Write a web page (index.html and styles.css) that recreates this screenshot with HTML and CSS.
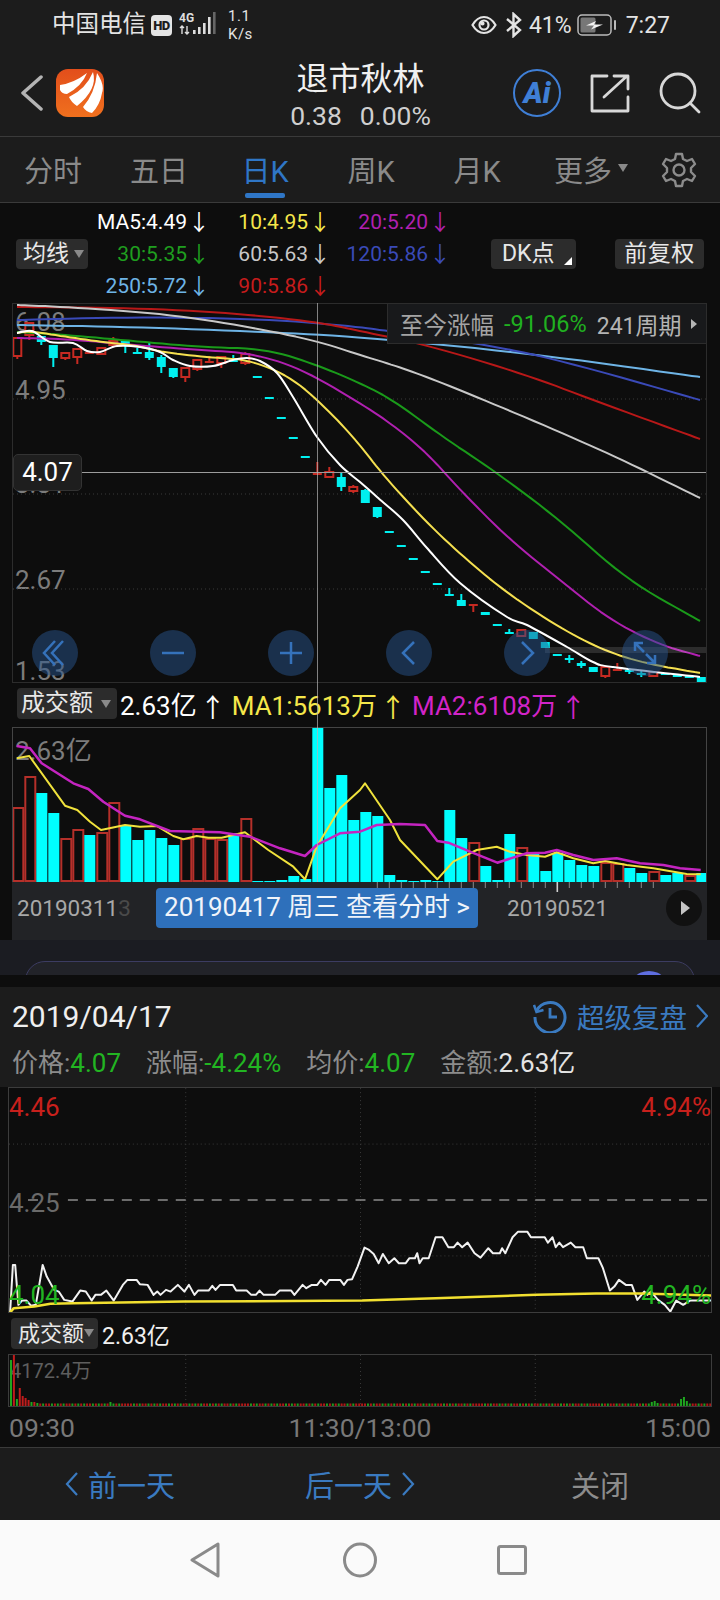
FILE: index.html
```html
<!DOCTYPE html>
<html lang="zh-CN">
<head>
  <meta charset="UTF-8" />
  <meta name="viewport" content="width=device-width, initial-scale=1.0"/>
  <title>退市秋林</title>
  <link rel="stylesheet" href="styles.css">
</head>
<body>

  <!-- Status bar -->
  <div class="status-bar">
    <div class="status-left">
      <span class="carrier">中国电信</span>
      <span class="hd-badge">HD</span>
      <svg class="signal" width="38" height="24" viewBox="0 0 38 24">
        <text x="0" y="10" class="signal-text">4G</text>
        <path d="M3 22V14M1 16l2-2 2 2M8 14v8M6 20l2 2 2-2" stroke="#ddd" stroke-width="1.4" fill="none"/>
        <rect x="14" y="18" width="2.6" height="4" fill="#ddd"/>
        <rect x="19" y="15" width="2.6" height="7" fill="#ddd"/>
        <rect x="24" y="11" width="2.6" height="11" fill="#ddd"/>
        <rect x="29" y="5" width="2.6" height="17" fill="#ddd"/>
        <rect x="34" y="0" width="2.6" height="22" fill="#666"/>
      </svg>
      <span class="net-speed">1.1<br>K/s</span>
    </div>
    <div class="status-right">
      <svg width="26" height="20" viewBox="0 0 26 20" fill="none" stroke="#e4e4e4" stroke-width="2.2">
        <path d="M1.5 10C5 4 9 2 13 2s8 2 11.5 8C21 16 17 18 13 18S5 16 1.5 10z"/>
        <circle cx="13" cy="10" r="4.5"/>
        <circle cx="11.5" cy="8.5" r="1" fill="#e4e4e4"/>
      </svg>
      <svg class="bt-icon" width="18" height="26" viewBox="0 0 18 26" fill="none" stroke="#e4e4e4" stroke-width="2.4">
        <path d="M2 7l13 11-6.5 6V2L15 8 2 19"/>
      </svg>
      <span class="battery-pct">41%</span>
      <svg class="battery" width="40" height="22" viewBox="0 0 40 22">
        <rect x="1" y="1" width="33" height="20" rx="4" fill="none" stroke="#bbb" stroke-width="1.5"/>
        <rect x="3.5" y="3.5" width="15" height="15" rx="1.5" fill="#777"/>
        <path d="M9 11.5l10-4.5-2 3.5 9 0-12 5 3-4z" fill="#f2f2f2"/>
        <rect x="37" y="6" width="2" height="10" rx="1" fill="#bbb"/>
      </svg>
      <span class="clock">7:27</span>
    </div>
  </div>

  <!-- Header -->
  <div class="app-header">
    <div class="header-left">
      <svg width="24" height="36" viewBox="0 0 24 36" fill="none" stroke="#b4b4b4" stroke-width="3.5" stroke-linecap="round" stroke-linejoin="round">
        <path d="M21 2L3 18l18 16"/>
      </svg>
      <svg class="app-logo" width="48" height="48" viewBox="0 0 48 48">
        <defs>
          <linearGradient id="logoBg" x1="0" y1="0" x2="0" y2="1">
            <stop offset="0" stop-color="#e24e1b"/>
            <stop offset="1" stop-color="#f0701e"/>
          </linearGradient>
        </defs>
        <rect width="48" height="48" rx="12" fill="url(#logoBg)"/>
        <g fill="#fff">
          <path d="M4 16Q18 14 31 4Q26 17 11 25Q6 25 4 21z"/>
          <path d="M13 28Q30 20 37 3Q42 20 21 37Q15 33 13 28z"/>
          <path d="M27 38Q39 24 41 4Q49 16 46 24Q44 36 36 44Q30 43 27 38z"/>
        </g>
      </svg>
    </div>
    <div class="stock-title">
      <div class="stock-name">退市秋林</div>
      <div class="stock-price"><span>0.38</span><span>0.00%</span></div>
    </div>
    <div class="header-right">
      <div class="ai-badge"><span>Ai</span></div>
      <svg width="40" height="40" viewBox="0 0 40 40" fill="none" stroke="#d8d8d8" stroke-width="2.8" stroke-linejoin="round" stroke-linecap="round">
        <path d="M17 3H2v35h36V24"/>
        <path d="M14 24L37 3M24 3h14v13"/>
      </svg>
      <svg class="search-icon" width="42" height="42" viewBox="0 0 42 42" fill="none" stroke="#d8d8d8" stroke-width="2.8" stroke-linecap="round">
        <circle cx="19" cy="19" r="17"/>
        <path d="M31 31l9 9"/>
      </svg>
    </div>
  </div>

  <!-- Period tabs -->
  <div class="period-tabs">
    <div class="tab">分时</div>
    <div class="tab">五日</div>
    <div class="tab active">日K</div>
    <div class="tab">周K</div>
    <div class="tab">月K</div>
    <div class="tab">更多<i class="tab-caret"></i></div>
    <svg class="gear" width="36" height="36" viewBox="0 0 36 36" fill="none" stroke="#8c8c8c" stroke-width="2.4" stroke-linejoin="round">
      <path d="M15 2h6l1 5 4 2 5-2 3 5-4 4v4l4 4-3 5-5-2-4 2-1 5h-6l-1-5-4-2-5 2-3-5 4-4v-4L2 12l3-5 5 2 4-2z"/>
      <circle cx="18" cy="18" r="5.5"/>
    </svg>
  </div>

  <!-- K line section -->
  <div class="kline-section">
    <div class="ma-bar">
      <div class="chip ma-chip">均线<i class="caret"></i></div>
      <div class="ma-grid">
        <span class="ma-white">MA5:4.49<b>↓</b></span>
        <span class="ma-yellow">10:4.95<b>↓</b></span>
        <span class="ma-purple">20:5.20<b>↓</b></span>
        <span class="ma-green">30:5.35<b>↓</b></span>
        <span class="ma-grey">60:5.63<b>↓</b></span>
        <span class="ma-blue">120:5.86<b>↓</b></span>
        <span class="ma-sky">250:5.72<b>↓</b></span>
        <span class="ma-red">90:5.86<b>↓</b></span>
      </div>
      <div class="chip dk-chip">DK点<i class="corner"></i></div>
      <div class="chip adjust-chip">前复权</div>
    </div>

    <div class="kline-chart">
      <span class="axis-label label-608">6.08</span>
      <span class="axis-label label-495">4.95</span>
      <span class="axis-label label-381">3.81</span>
      <span class="axis-label label-267">2.67</span>
      <span class="axis-label label-153">1.53</span>
      <svg id="klineSvg" class="chart-svg" viewBox="13 304 693 378"></svg>
      <div class="range-box">
        <span class="range-title">至今涨幅</span>
        <span class="range-value">-91.06%</span>
        <span class="range-count">241周期</span>
        <i class="range-caret"></i>
      </div>
      <div class="cross-h"></div>
      <div class="price-tag">4.07</div>
      <div class="scroll-hint"></div>
      <div class="chart-buttons">
        <div class="round-btn"><svg width="46" height="46" viewBox="0 0 46 46"><path d="M23 11L12 23l11 12M31 11L20 23l11 12"/></svg></div>
        <div class="round-btn"><svg width="46" height="46" viewBox="0 0 46 46"><path d="M12 23h22"/></svg></div>
        <div class="round-btn"><svg width="46" height="46" viewBox="0 0 46 46"><path d="M12 23h22M23 12v22"/></svg></div>
        <div class="round-btn"><svg width="46" height="46" viewBox="0 0 46 46"><path d="M28 12L17 23l11 11"/></svg></div>
        <div class="round-btn"><svg width="46" height="46" viewBox="0 0 46 46"><path d="M18 12l11 11-11 11"/></svg></div>
        <div class="round-btn"><svg width="46" height="46" viewBox="0 0 46 46"><path d="M13 13l9 9M13 21v-8h8M33 33l-9-9M33 25v8h-8"/></svg></div>
      </div>
    </div>

    <div class="vol-bar">
      <div class="chip vol-chip">成交额<i class="caret"></i></div>
      <span class="vol-value">2.63亿<b>↑</b></span>
      <span class="vol-ma1">MA1:5613万<b>↑</b></span>
      <span class="vol-ma2">MA2:6108万<b>↑</b></span>
    </div>

    <div class="vol-chart">
      <span class="vol-label">2.63亿</span>
      <svg id="volSvg" class="chart-svg" viewBox="13 728 693 154"></svg>
    </div>

    <div class="date-axis">
      <svg id="tickSvg" class="tick-svg" viewBox="12 882 695 12"></svg>
      <span class="date-label first-date">20190311<span class="date-fade">3</span></span>
      <div class="date-pill">20190417 周三 查看分时 &gt;</div>
      <span class="date-label">20190521</span>
      <div class="play-btn"><i></i></div>
    </div>

    <div class="cross-v"></div>
  </div>

  <!-- Page behind the popup -->
  <div class="peek-band">
    <div class="peek-card"><i class="peek-dot"></i></div>
  </div>
  <div class="peek-gap"></div>

  <!-- Day detail popup -->
  <div class="day-panel">
    <div class="day-title">
      <span class="day-date">2019/04/17</span>
      <div class="replay-link">
        <svg width="34" height="34" viewBox="0 0 34 34" fill="none" stroke="#3a7ac0" stroke-width="3">
          <path d="M3.5 12A15 15 0 1 1 2 18"/>
          <path d="M1 6l2.5 7 7-2" stroke-width="2.5"/>
          <path d="M17 9v9h7" stroke-width="2.8"/>
        </svg>
        <span>超级复盘</span>
        <svg width="12" height="26" viewBox="0 0 12 26" fill="none" stroke="#3a7ac0" stroke-width="2.2"><path d="M1 2l10 11L1 24"/></svg>
      </div>
    </div>
    <div class="day-stats">
      <span>价格:<em class="down">4.07</em></span>
      <span>涨幅:<em class="down">-4.24%</em></span>
      <span>均价:<em class="down">4.07</em></span>
      <span>金额:<em class="plain">2.63亿</em></span>
    </div>
  </div>

  <div class="minute-section">
    <div class="minute-chart">
      <svg id="minuteSvg" class="chart-svg" viewBox="9 1088 703 224"></svg>
      <span class="min-label top-left">4.46</span>
      <span class="min-label top-right">4.94%</span>
      <span class="min-label mid-left">4.25</span>
      <span class="min-label low-left">4.04</span>
      <span class="min-label low-right">4.94%</span>
    </div>
    <div class="minute-vol-bar">
      <div class="chip min-vol-chip">成交额<i class="caret"></i></div>
      <span class="min-vol-value">2.63亿</span>
    </div>
    <div class="minute-vol-chart">
      <span class="min-vol-label">4172.4万</span>
      <svg id="minVolSvg" class="chart-svg" viewBox="9 1355 703 51"></svg>
    </div>
    <div class="time-axis">
      <span>09:30</span>
      <span>11:30/13:00</span>
      <span>15:00</span>
    </div>
  </div>

  <div class="day-actions">
    <div class="action blue">
      <svg width="13" height="26" viewBox="0 0 13 26" fill="none" stroke="#3a7ac0" stroke-width="2.2"><path d="M12 2L2 13l10 11"/></svg>
      前一天
    </div>
    <div class="action blue">
      后一天
      <svg width="13" height="26" viewBox="0 0 13 26" fill="none" stroke="#3a7ac0" stroke-width="2.2"><path d="M1 2l10 11L1 24"/></svg>
    </div>
    <div class="action">关闭</div>
  </div>

  <!-- Android nav -->
  <div class="nav-bar">
    <svg width="30" height="36" viewBox="0 0 30 36" fill="none" stroke="#8a8a8a" stroke-width="3" stroke-linejoin="round"><path d="M28 2v32L2 18z"/></svg>
    <svg width="36" height="36" viewBox="0 0 36 36" fill="none" stroke="#8a8a8a" stroke-width="3"><ellipse cx="18" cy="18" rx="15.5" ry="16"/></svg>
    <svg class="nav-square" width="30" height="30" viewBox="0 0 30 30" fill="none" stroke="#8a8a8a" stroke-width="3"><rect x="1.5" y="1.5" width="27" height="27" rx="2"/></svg>
  </div>

  <script src="chart.js"></script>
</body>
</html>
```

FILE: styles.css
```css
* {
  box-sizing: border-box;
  margin: 0;
  padding: 0;
}

html, body {
  width: 720px;
  height: 1600px;
  overflow: hidden;
}

body {
  background-color: #0d0d0d;
  color: #fff;
  font-family: Roboto, "Noto Sans CJK SC", sans-serif;
}

i, em, b {
  font-style: normal;
  font-weight: 400;
}

/* Status bar */
.status-bar {
  height: 50px;
  background-color: #1c1c1c;
  display: flex;
  justify-content: space-between;
  align-items: center;
  padding: 0 50px 0 52px;
  color: #e4e4e4;
}

.status-left,
.status-right {
  display: flex;
  align-items: center;
}

.carrier {
  font-size: 23.5px;
  line-height: 1;
}

.hd-badge {
  width: 21px;
  height: 21px;
  margin-left: 5px;
  border-radius: 4px;
  background-color: #e4e4e4;
  color: #1c1c1c;
  font-size: 13px;
  font-weight: 900;
  line-height: 21px;
  text-align: center;
  letter-spacing: -0.5px;
}

.signal {
  margin-left: 7px;
  margin-top: -3px;
}

.signal-text {
  font-size: 12px;
  font-weight: 700;
  fill: #ddd;
}

.net-speed {
  margin-left: 11px;
  font-size: 15px;
  line-height: 18px;
  letter-spacing: 0.5px;
}

.bt-icon {
  margin-left: 8px;
}

.battery-pct {
  margin-left: 6px;
  font-size: 23px;
}

.battery {
  margin-left: 5px;
}

.clock {
  margin-left: 9px;
  font-size: 23px;
}

/* Header */
.app-header {
  height: 87px;
  background-color: #1c1c1c;
  border-bottom: 1px solid #3a3a3a;
  display: grid;
  grid-template-columns: 1fr auto 1fr;
  align-items: center;
  padding: 0 19px 0 20px;
}

.header-left {
  display: flex;
  align-items: center;
  gap: 12px;
}

.stock-title {
  text-align: center;
  padding-top: 10px;
}

.stock-name {
  font-size: 32px;
  line-height: 36px;
  color: #f0f0f0;
}

.stock-price {
  display: flex;
  justify-content: center;
  gap: 18px;
  font-size: 26.5px;
  line-height: 38px;
  color: #cfcfcf;
}

.header-right {
  display: flex;
  align-items: center;
  justify-content: flex-end;
  gap: 29px;
}

.ai-badge {
  width: 48px;
  height: 48px;
  border: 2.5px solid #3f7fd6;
  border-radius: 50%;
  display: flex;
  align-items: center;
  justify-content: center;
  color: #3f7fd6;
  font-size: 29px;
  font-weight: 900;
  font-style: italic;
}

/* Tabs */
.period-tabs {
  height: 66px;
  background-color: #1c1c1c;
  border-bottom: 1px solid #3a3a3a;
  display: grid;
  grid-template-columns: repeat(6, 106px) 1fr;
  align-items: center;
  position: relative;
}

.tab {
  text-align: center;
  font-size: 29px;
  line-height: 65px;
  padding-top: 3px;
  height: 65px;
  color: #8a8a8a;
  position: relative;
}

.tab.active {
  color: #2f76c6;
}

.tab.active::after {
  content: "";
  position: absolute;
  left: 33px;
  bottom: 4px;
  width: 40px;
  height: 5px;
  border-radius: 2px;
  background-color: #2f76c6;
}

.tab-caret {
  position: absolute;
  right: 8px;
  top: 27px;
  border-left: 5px solid transparent;
  border-right: 5px solid transparent;
  border-top: 8px solid #8a8a8a;
}

.gear {
  justify-self: center;
  margin-left: 2px;
}

/* K line section */
.kline-section {
  position: relative;
  height: 737px;
  background-color: #0d0d0d;
}

.ma-bar {
  height: 100px;
  display: flex;
  align-items: center;
  padding: 2px 16px 0 16px;
}

.chip {
  background-color: #2c2c2c;
  border-radius: 4px;
  color: #e8e8e8;
  font-size: 23px;
  height: 30px;
  line-height: 30px;
  position: relative;
}

.ma-chip {
  width: 72px;
  padding-left: 7px;
}

.caret {
  position: absolute;
  right: 4px;
  top: 11px;
  border-left: 5px solid transparent;
  border-right: 5px solid transparent;
  border-top: 8px solid #8a8a8a;
}

.ma-grid {
  width: 363px;
  display: grid;
  grid-template-columns: 122px 121px 120px;
  grid-template-rows: repeat(3, 32px);
  font-size: 21px;
  line-height: 32px;
  text-align: right;
}

.ma-grid b {
  display: inline-block;
  width: 22px;
  margin-left: 1px;
  text-align: center;
  font-family: "Noto Sans CJK SC", sans-serif;
  font-size: 22px;
  line-height: 24px;
  vertical-align: -1px;
}

.ma-white { color: #fff; }
.ma-yellow { color: #f5e74a; }
.ma-purple { color: #b020b0; }
.ma-green { color: #1f9e1f; grid-row: 2; grid-column: 1; }
.ma-grey { color: #c8c8c8; grid-row: 2; grid-column: 2; }
.ma-blue { color: #3a4ab8; grid-row: 2; grid-column: 3; }
.ma-sky { color: #6eb4e6; grid-row: 3; grid-column: 1; }
.ma-red { color: #c61c1c; grid-row: 3; grid-column: 2; }

.dk-chip {
  width: 85px;
  margin-left: 40px;
  padding-left: 11px;
}

.corner {
  position: absolute;
  right: 4px;
  bottom: 4px;
  border-left: 8px solid transparent;
  border-bottom: 8px solid #fff;
}

.adjust-chip {
  width: 89px;
  margin-left: 39px;
  text-align: center;
  letter-spacing: 0.5px;
}

.kline-chart {
  position: relative;
  width: 695px;
  height: 380px;
  margin-left: 12px;
  border: 1px solid #2c2c2c;
}

.chart-svg {
  position: absolute;
  left: 0;
  top: 0;
  width: 100%;
  height: 100%;
}

.axis-label {
  position: absolute;
  left: 2px;
  font-size: 26px;
  line-height: 26px;
  color: #7c7c7c;
}

.label-608 { top: 5px; }
.label-495 { top: 73px; }
.label-381 { top: 167px; }
.label-267 { top: 263px; }
.label-153 { top: 354px; }

.range-box {
  position: absolute;
  right: 0;
  top: 0;
  width: 319px;
  height: 40px;
  background-color: #18191b;
  border-bottom: 1px solid #2c2c2c;
  border-left: 1px solid #2c2c2c;
  display: flex;
  align-items: center;
  font-size: 23px;
  padding-left: 12px;
}

.range-title { color: #a4a4a4; font-size: 23.5px; }
.range-value { color: #20b020; margin-left: 10px; font-size: 23.5px; }
.range-count { color: #b4b4b4; margin-left: 10px; }

.range-caret {
  margin-left: 9px;
  border-top: 5px solid transparent;
  border-bottom: 5px solid transparent;
  border-left: 6px solid #b4b4b4;
}

.cross-h {
  position: absolute;
  left: 68px;
  right: 0;
  top: 168px;
  height: 1px;
  background-color: #9c9c9c;
}

.price-tag {
  position: absolute;
  left: 0;
  top: 150px;
  width: 69px;
  height: 37px;
  background-color: #1e1e1e;
  border: 1px solid #333;
  border-radius: 5px;
  font-size: 26px;
  line-height: 35px;
  text-align: center;
}

.scroll-hint {
  position: absolute;
  left: 532px;
  right: 0;
  top: 343px;
  height: 6px;
  background-color: rgba(255, 255, 255, 0.13);
}

.chart-buttons {
  position: absolute;
  left: 19px;
  top: 326px;
  display: flex;
  gap: 72px;
}

.round-btn {
  width: 46px;
  height: 46px;
  border-radius: 50%;
  background-color: rgba(40, 84, 140, 0.5);
}

.round-btn svg {
  display: block;
  fill: none;
  stroke: #3572bb;
  stroke-width: 2.5;
}

.vol-bar {
  height: 44px;
  display: flex;
  align-items: center;
  font-size: 26px;
  padding: 0 0 3px 17px;
}

.vol-bar b {
  display: inline-block;
  width: 26px;
  margin-left: 3px;
  text-align: center;
  font-family: "Noto Sans CJK SC", sans-serif;
  font-size: 26px;
  line-height: 26px;
  vertical-align: -2px;
}

.vol-chip {
  width: 100px;
  height: 31px;
  font-size: 24px;
  line-height: 31px;
  padding-left: 4px;
  margin-right: 3px;
}

.vol-chip .caret {
  right: 6px;
  top: 12px;
}

.vol-value { color: #fff; }
.vol-ma1 { color: #f5e74a; margin-left: 6px; }
.vol-ma2 { color: #d224c8; margin-left: 6px; }

.vol-chart {
  position: relative;
  width: 695px;
  height: 155px;
  margin-left: 12px;
  border: 1px solid #444;
  border-bottom: none;
}

.vol-label {
  position: absolute;
  left: 2px;
  top: 10px;
  font-size: 26px;
  line-height: 26px;
  color: #7c7c7c;
}

.date-axis {
  position: relative;
  width: 695px;
  height: 58px;
  margin-left: 12px;
  background-color: #222326;
  display: flex;
  align-items: flex-start;
  padding-top: 6px;
}

.tick-svg {
  position: absolute;
  left: 0;
  top: 0;
  width: 695px;
  height: 12px;
}

.date-label {
  position: relative;
  font-size: 22.5px;
  line-height: 40px;
  color: #a8a8a8;
}

.first-date {
  width: 144px;
  padding-left: 5px;
}

.date-fade {
  color: #4a4a4a;
}

.date-pill {
  position: relative;
  width: 322px;
  height: 40px;
  margin-right: 29px;
  border-radius: 4px;
  background-color: #2e70bb;
  font-size: 26px;
  line-height: 39px;
  text-align: center;
  color: #f0f4fa;
  white-space: nowrap;
}

.play-btn {
  position: relative;
  width: 36px;
  height: 36px;
  margin: 2px 5px 0 auto;
  border-radius: 50%;
  background-color: #111;
  display: flex;
  align-items: center;
  justify-content: center;
}

.play-btn i {
  margin-left: 3px;
  border-top: 7px solid transparent;
  border-bottom: 7px solid transparent;
  border-left: 9px solid #c4c4c4;
}

.cross-v {
  position: absolute;
  left: 317px;
  top: 100px;
  width: 1px;
  height: 579px;
  background-color: rgba(180, 180, 180, 0.7);
}

/* Page peeking behind the popup */
.peek-band {
  height: 35px;
  background-color: #1b1c22;
  padding: 21px 25px 0 25px;
  overflow: hidden;
}

.peek-card {
  position: relative;
  height: 40px;
  background-color: #222329;
  border: 1.5px solid #3c3c62;
  border-radius: 20px 20px 0 0;
}

.peek-dot {
  position: absolute;
  right: 24px;
  top: 9px;
  width: 42px;
  height: 42px;
  border-radius: 50%;
  background-color: #5f6ee0;
}

.peek-gap {
  height: 12px;
  background-color: #0d0d0d;
}

/* Popup */
.day-panel {
  height: 100px;
  background-color: #1c1c1c;
  padding: 0 12px;
  position: relative;
}

.day-title {
  height: 58px;
  display: flex;
  justify-content: space-between;
  align-items: center;
}

.day-date {
  font-size: 30px;
  color: #efefef;
}

.replay-link {
  display: flex;
  align-items: center;
  color: #3a7ac0;
  font-size: 27.5px;
}

.replay-link span {
  margin: 0 9px 0 10px;
}

.day-stats {
  display: flex;
  gap: 25px;
  font-size: 26px;
  line-height: 36px;
  color: #8c8c8c;
}

.down { color: #22b522; }
.plain { color: #e4e4e4; }

.minute-section {
  height: 360px;
  background-color: #0d0d0d;
  padding: 0 8px;
  position: relative;
}

.minute-chart {
  position: relative;
  height: 226px;
  border: 1px solid #3c3c3c;
}

.min-label {
  position: absolute;
  font-size: 26px;
  line-height: 26px;
}

.top-left { left: 0; top: 6px; color: #c8201c; }
.top-right { right: 0; top: 6px; color: #c8201c; }
.mid-left { left: 0; top: 102px; color: #6a6a6a; }
.low-left { left: 0; top: 194px; color: #22b522; }
.low-right { right: 0; top: 194px; color: #22b522; }

.minute-vol-bar {
  height: 41px;
  display: flex;
  align-items: center;
  padding: 0 0 0 3px;
}

.min-vol-chip {
  width: 87px;
  height: 31px;
  font-size: 22px;
  line-height: 31px;
  padding-left: 7px;
}

.min-vol-value {
  margin-left: 4px;
  font-size: 23px;
  color: #f0f0f0;
}

.minute-vol-chart {
  position: relative;
  height: 53px;
  border: 1px solid #3c3c3c;
}

.min-vol-label {
  position: absolute;
  left: 1px;
  top: 4px;
  font-size: 20px;
  line-height: 24px;
  color: #5e5e5e;
}

.time-axis {
  display: flex;
  justify-content: space-between;
  padding: 0 1px;
  height: 40px;
  line-height: 41px;
  font-size: 26.5px;
  color: #787878;
}

/* Popup actions */
.day-actions {
  height: 73px;
  background-color: #1c1c1c;
  border-top: 1px solid #3a3a3a;
  display: grid;
  grid-template-columns: repeat(3, 240px);
  align-items: center;
  justify-items: center;
}

.action {
  display: flex;
  align-items: center;
  gap: 10px;
  font-size: 29px;
  color: #8c8c8c;
}

.action.blue {
  color: #3a7ac0;
}

/* Nav */
.nav-bar {
  height: 80px;
  background-color: #fafafa;
  display: grid;
  grid-template-columns: repeat(3, 155px);
  justify-content: center;
  justify-items: center;
  align-items: center;
}

.nav-square {
  margin-right: 6px;
}
```

FILE: chart.js
```js
// k line chart, volume bars and the minute chart drawn from traced data
var CYAN = '#00f0f0';
var RED = '#c62a22';

// fast line: catmull-rom through every point
function smoothPath(pts) {
  var d = 'M' + pts[0][0] + ' ' + pts[0][1];
  for (var i = 0; i < pts.length - 1; i++) {
    var p0 = pts[i - 1] || pts[i];
    var p1 = pts[i];
    var p2 = pts[i + 1];
    var p3 = pts[i + 2] || p2;
    d += 'C' + (p1[0] + (p2[0] - p0[0]) / 6).toFixed(1) + ' ' + (p1[1] + (p2[1] - p0[1]) / 6).toFixed(1) +
      ' ' + (p2[0] - (p3[0] - p1[0]) / 6).toFixed(1) + ' ' + (p2[1] - (p3[1] - p1[1]) / 6).toFixed(1) +
      ' ' + p2[0] + ' ' + p2[1];
  }
  return d;
}

// slow lines: corner cutting, which irons out the tracing wobble
function chaikin(pts, rounds) {
  for (var r = 0; r < rounds; r++) {
    var next = [pts[0]];
    for (var i = 0; i < pts.length - 1; i++) {
      var a = pts[i], b = pts[i + 1];
      next.push([a[0] * 0.75 + b[0] * 0.25, a[1] * 0.75 + b[1] * 0.25]);
      next.push([a[0] * 0.25 + b[0] * 0.75, a[1] * 0.25 + b[1] * 0.75]);
    }
    next.push(pts[pts.length - 1]);
    pts = next;
  }
  return pts.map(function (p) { return p[0].toFixed(1) + ',' + p[1].toFixed(1); });
}

function curve(pts, color, width) {
  return '<path d="' + smoothPath(pts) + '" fill="none" stroke="' + color + '" stroke-width="' + width + '"/>';
}

function poly(pts, color, width) {
  return '<polyline points="' + pts.join(' ') + '" fill="none" stroke="' + color + '" stroke-width="' + width + '" stroke-linejoin="round"/>';
}

function rect(x, y, w, h, fill) {
  return '<rect x="' + x + '" y="' + y + '" width="' + w + '" height="' + h + '" fill="' + fill + '"/>';
}

function gridLine(x1, y1, x2, y2, color, dash) {
  return '<line x1="' + x1 + '" y1="' + y1 + '" x2="' + x2 + '" y2="' + y2 + '" stroke="' + color + '" stroke-dasharray="' + dash + '"/>';
}

/* ---- K line ---- */
var maLines = [
  ['#6eb4e6', 2, [[17,325],[133,327],[267,332],[360,337],[527,353],[700,377]]],
  ['#3a4ab8', 2, [[17,320],[133,317],[267,319],[360,327],[387,331],[477,343],[560,360],[700,400]]],
  ['#b81818', 2, [[17,307],[133,308],[233,313],[317,322],[360,331],[427,345],[527,375],[593,400],[700,439]]],
  ['#c8c8c8', 2, [[17,305],[67,307],[167,314],[250,327],[317,341],[360,355],[393,365],[427,377],[477,397],[560,432],[627,462],[700,498]]],
  ['#1a9a1a', 2, [[17,332],[67,335],[133,341],[200,347],[267,349],[317,365],[360,383],[393,400],[443,437],[493,470],[560,520],[627,580],[700,621]]],
  ['#b020b0', 2, [[17,338],[67,339],[133,345],[200,350],[250,353],[300,368],[360,403],[393,425],[427,453],[460,490],[510,540],[560,580],[610,620],[660,645],[700,656]]],
  ['#f5e050', 2, [[17,333],[30,331],[67,337],[110,343],[133,345],[167,353],[217,358],[250,360],[293,378],[333,415],[360,445],[383,475],[427,523],[467,560],[507,593],[560,628],[603,650],[643,663],[700,673]]]
];
var ma5 = [[17,333],[32,331],[50,342],[73,343],[87,351],[100,352],[117,346],[140,347],[160,352],[173,360],[190,366],[213,366],[233,360],[247,358],[260,361],[277,373],[293,397],[317,437],[340,465],[360,482],[377,497],[403,520],[427,548],[460,583],[507,617],[527,625],[567,647],[593,662],[613,667],[700,677]];

// [cyan or red, wick top, body top, body bottom, wick bottom]; hollow red when the body is tall enough
var candles = [
  ['r',338,338,356,359],['r',323,323,335,340],['c',336,336,342,345],['c',345,345,358,367],
  ['r',352,353,358,360],['r',349,349,357,364],['r',352,352,353,353],['r',348,348,354,355],
  ['r',337,341,345,345],['c',341,341,345,353],['c',348,352,353,353],['c',343,352,358,360],
  ['c',355,357,367,373],['c',368,368,377,378],['r',368,368,377,382],['r',360,360,369,371],
  ['r',356,361,362,362],['r',357,357,363,368],['c',355,359,362,362],['r',352,354,363,365],
  ['c',376,376,377,377],['c',397,397,398,398],['c',417,417,418,418],['c',437,437,438,438],
  ['c',456,456,457,457],['r',462,472,475,475],['r',467,472,477,478],['c',473,477,487,491],
  ['r',485,487,491,493],['c',489,490,503,503],['c',507,507,517,518],['c',531,531,532,532],
  ['c',545,545,546,546],['c',558,558,559,559],['c',571,571,572,572],['c',583,583,584,584],
  ['c',588,594,596,596],['c',594,600,606,606],['r',604,604,606,612],['c',612,612,615,615],
  ['c',624,624,625,625],['c',629,632,634,634],['r',630,630,636,636],['c',632,632,639,639],
  ['c',642,642,648,648],['c',654,654,655,655],['c',655,658,660,663],['c',661,663,666,668],
  ['c',667,667,672,672],['r',667,667,676,678],['r',663,669,670,670],['c',668,670,672,674],
  ['c',671,673,675,677],['r',672,672,676,676],['c',673,673,675,675],['c',675,675,677,677],
  ['c',676,676,678,678],['c',677,677,683,683]
];

var kline = '';
[399, 494, 589].forEach(function (y) {
  kline += gridLine(13, y, 706, y, '#3a3a3a', '1 3');
});
candles.forEach(function (c, i) {
  var x = 17.3 + 12 * i;
  var color = c[0] === 'c' ? CYAN : RED;
  var h = c[3] - c[2];
  kline += rect(x - 1, c[1], 2, c[4] - c[1], color);
  if (c[0] === 'r' && h >= 4) {
    kline += '<rect x="' + (x - 4) + '" y="' + c[2] + '" width="8" height="' + h + '" fill="#0d0d0d" stroke="' + color + '" stroke-width="2"/>';
  } else {
    kline += rect(x - 4.5, c[2], 9, Math.max(h, 2), color);
  }
});
maLines.forEach(function (l) {
  kline += poly(chaikin(l[2], 3), l[0], l[1]);
});
kline += curve(ma5, '#ffffff', 2);
document.getElementById('klineSvg').innerHTML = kline;

/* ---- Volume ---- */
var volBars = [
  ['r',808],['r',777],['c',793],['c',813],['r',839],['r',830],['c',835],['r',833],['r',803],['c',825],
  ['c',840],['c',830],['c',838],['c',845],['r',839],['r',829],['r',839],['r',840],['c',833],['r',819],
  ['c',881],['c',881],['c',880],['c',876],['c',879],['c',728],['c',788],['c',775],['c',820],['c',812],
  ['c',816],['c',875],['c',880],['c',881],['c',880],['c',881],['c',810],['c',838],['r',843],['c',866],
  ['c',880],['c',834],['r',848],['c',854],['c',871],['c',853],['c',860],['c',865],['c',866],['r',863],
  ['r',864],['c',868],['c',873],['r',872],['c',875],['c',873],['r',876],['c',873]
];

var vol = '';
volBars.forEach(function (b, i) {
  var x = 12.3 + 12 * i;
  if (b[0] === 'c') {
    vol += rect(x, b[1], 11, 882 - b[1], '#00ffff');
  } else {
    vol += '<rect x="' + (x + 1) + '" y="' + b[1] + '" width="10" height="' + (881 - b[1]) + '" fill="#0d0d0d" stroke="#b5302a" stroke-width="2"/>';
  }
});

var volY = [[50,235],[88,228],[195,377],[232,390],[270,425],[303,450],[375,435],[420,440],[470,438],[520,468],[550,478],[590,468],[625,473],[665,473],[735,457],[805,510],[880,560],[915,598],[950,500],[1020,385],[1080,330],[1095,310],[1170,420],[1200,480],[1312,598],[1360,545],[1430,510],[1490,500],[1530,515],[1580,525],[1635,530],[1670,517],[1720,535],[1780,550],[1815,543],[1880,555],[1960,565],[2060,582],[2102,583]];
var volM = [[50,198],[90,205],[125,250],[220,310],[265,327],[310,365],[375,407],[420,418],[510,453],[660,457],[750,470],[840,505],[915,528],[950,495],[1020,460],[1080,455],[1130,435],[1200,432],[1275,435],[1312,483],[1345,488],[1410,515],[1492,548],[1580,520],[1635,518],[1670,510],[1720,525],[1780,540],[1850,535],[1920,550],[1990,555],[2040,565],[2102,570]];

function volPoints(list) {
  return list.map(function (p) {
    return (p[0] / 3).toFixed(1) + ',' + (680 + p[1] / 3).toFixed(1);
  });
}
vol += poly(volPoints(volY), '#f0e23c', 2);
vol += poly(volPoints(volM), '#c424c0', 2.5);
document.getElementById('volSvg').innerHTML = vol;

var ticks = '';
for (var t = 30; t < 54; t++) {
  var tx = 17.3 + 12 * t;
  ticks += t === 45
    ? rect(tx - 0.8, 882, 1.6, 10, '#d0d0d0')
    : rect(tx - 0.5, 882, 1, 6, '#8a8a8a');
}
document.getElementById('tickSvg').innerHTML = ticks;

/* ---- Minute chart ---- */
var minuteWhite = [[22,968],[28,825],[33,825],[40,945],[48,932],[58,932],[68,948],[78,945],[85,890],[93,825],[102,860],[118,900],[128,905],[140,930],[158,935],[175,902],[187,905],[200,932],[208,915],[220,915],[232,902],[248,932],[268,885],[278,870],[298,870],[305,883],[322,885],[335,915],[343,905],[350,915],[362,900],[372,905],[388,885],[402,905],[412,885],[424,915],[432,902],[455,902],[463,888],[470,900],[480,885],[508,885],[515,902],[538,902],[548,915],[558,915],[566,902],[575,915],[600,915],[610,902],[635,902],[642,915],[660,885],[668,895],[680,885],[692,885],[700,870],[710,885],[718,870],[742,870],[750,885],[758,870],[768,868],[780,830],[795,773],[805,780],[815,792],[826,820],[835,792],[848,820],[860,805],[870,820],[885,820],[893,805],[905,805],[910,790],[915,820],[922,805],[935,805],[950,742],[965,742],[978,772],[990,772],[998,758],[1008,772],[1020,758],[1035,790],[1048,803],[1065,775],[1075,790],[1090,790],[1095,775],[1102,790],[1118,742],[1130,725],[1150,725],[1158,742],[1188,742],[1195,758],[1205,742],[1212,772],[1220,758],[1228,772],[1245,758],[1255,772],[1272,772],[1280,805],[1305,805],[1315,835],[1330,902],[1340,890],[1350,870],[1365,885],[1378,885],[1390,930],[1405,905],[1412,915],[1420,905],[1435,930],[1450,945],[1462,965],[1475,932],[1490,945],[1505,932],[1520,932],[1552,932]];
var minuteYellow = [[22,968],[30,955],[75,950],[110,942],[160,940],[400,935],[790,932],[950,925],[1170,915],[1300,911],[1400,911],[1552,917]];

function minutePoints(list) {
  return list.map(function (p) {
    return (p[0] / 2.178).toFixed(1) + ',' + (990 + p[1] / 3).toFixed(1);
  });
}

var minute = '';
[186, 361, 536].forEach(function (x) {
  minute += gridLine(x, 1088, x, 1312, '#3a3a3a', '1 3');
});
[1144, 1256].forEach(function (y) {
  minute += gridLine(9, y, 712, y, '#3a3a3a', '1 3');
});
minute += '<line x1="28" y1="1200" x2="38" y2="1200" stroke="#8c8c8c" stroke-width="1.5"/>';
minute += '<line x1="68" y1="1200" x2="712" y2="1200" stroke="#8c8c8c" stroke-width="1.5" stroke-dasharray="10 8"/>';
minute += poly(minutePoints(minuteWhite), '#f2f2f2', 2);
minute += poly(minutePoints(minuteYellow), '#f2e030', 2.5);
document.getElementById('minuteSvg').innerHTML = minute;

var minVol = '';
[186, 361, 536].forEach(function (x) {
  minVol += gridLine(x, 1355, x, 1406, '#3a3a3a', '1 3');
});
var first = [['g',46],['r',51],['g',7],['r',18],['r',10],['r',8],['r',6],['g',4],['r',4],['g',3]];
var peaks = { 219: 4, 220: 5, 221: 3, 229: 7, 230: 9, 231: 5, 34: 4 };
for (var n = 0; n < 240; n++) {
  var mx = 10 + n * 2.93;
  var h = 2.5, color = (n * 7 + (n >> 3)) % 5 < 3 ? '#b01818' : '#1f9a1f';
  if (n < first.length) {
    h = first[n][1];
    color = first[n][0] === 'g' ? '#1fa61f' : '#c01c1c';
  } else if (peaks[n]) {
    h = peaks[n];
    color = '#1fa61f';
  }
  minVol += rect(mx.toFixed(1), 1406 - h, 2, h, color);
}
document.getElementById('minVolSvg').innerHTML = minVol;
```
